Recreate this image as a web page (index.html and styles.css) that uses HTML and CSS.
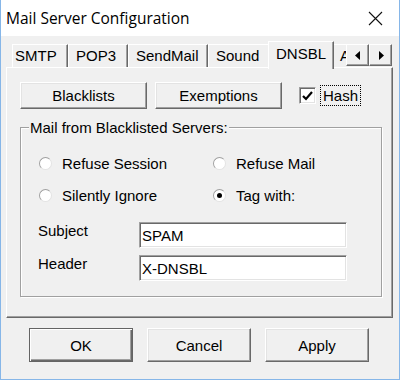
FILE: index.html
```html
<!DOCTYPE html>
<html lang="en">
<head>
  <meta charset="UTF-8" />
  <title>Mail Server Configuration</title>
  <link rel="stylesheet" href="styles.css">
</head>
<body>

<div class="window">
    <div class="titlebar">
        <span class="title">Mail Server Configuration</span>
        <svg class="close" width="15" height="15" viewBox="0 0 15 15">
            <path d="M1 1L14 14M14 1L1 14" stroke="#111" stroke-width="1.1" fill="none"/>
        </svg>
    </div>

    <div class="client">
        <!-- Tabs -->
        <div class="tabrow">
            <div class="tabstrip">
                <div class="tab tab-smtp">SMTP</div>
                <div class="tab tab-pop3">POP3</div>
                <div class="tab tab-sendmail">SendMail</div>
                <div class="tab tab-sound">Sound</div>
                <div class="tab tab-dnsbl active">DNSBL</div>
                <div class="tab tab-more">A</div>
            </div>
            <div class="scroller">
                <span class="scroll-btn">
                    <svg width="6" height="9" viewBox="0 0 6 9"><path d="M5 0V9L0 4.5Z" fill="#000"/></svg>
                </span>
                <span class="scroll-btn">
                    <svg width="6" height="9" viewBox="0 0 6 9"><path d="M1 0V9L6 4.5Z" fill="#000"/></svg>
                </span>
            </div>
        </div>

        <!-- DNSBL page -->
        <div class="panel">
            <div class="toprow">
                <button class="btn list-btn">Blacklists</button>
                <button class="btn list-btn">Exemptions</button>
                <span class="check">
                    <svg width="11" height="10" viewBox="0 0 11 10"><path d="M1 5L4 8L10 1" stroke="#000" stroke-width="2.2" fill="none"/></svg>
                </span>
                <span class="check-label">Hash</span>
            </div>

            <fieldset class="group">
                <legend>Mail from Blacklisted Servers:</legend>
                <div class="options">
                    <div class="option"><span class="radio"></span>Refuse Session</div>
                    <div class="option"><span class="radio"></span>Refuse Mail</div>
                    <div class="option"><span class="radio"></span>Silently Ignore</div>
                    <div class="option"><span class="radio checked"></span>Tag with:</div>
                </div>
                <div class="fields">
                    <div class="field">
                        <label>Subject</label>
                        <input class="input" type="text" value="SPAM">
                    </div>
                    <div class="field">
                        <label>Header</label>
                        <input class="input" type="text" value="X-DNSBL">
                    </div>
                </div>
            </fieldset>
        </div>

        <div class="actions">
            <button class="btn action-btn btn-default">OK</button>
            <button class="btn action-btn">Cancel</button>
            <button class="btn action-btn">Apply</button>
        </div>
    </div>
</div>

</body>
</html>
```

FILE: styles.css
```css
body {
    margin: 0;
    font-family: "Liberation Sans", Arial, sans-serif;
    font-size: 15px;
    color: #000;
}

.window {
    width: 400px;
    height: 380px;
    box-sizing: border-box;
    border: 1px solid #86b6e8;
    border-top: 0;
    display: flex;
    flex-direction: column;
    background: #f0f0f0;
}

.titlebar {
    height: 36px;
    flex: none;
    background: #fff;
    display: flex;
    align-items: center;
    justify-content: space-between;
    padding: 0 16px 0 5px;
}

.title {
    font-family: "Open Sans", "Noto Sans", sans-serif;
    font-size: 15.5px;
    color: #000;
}

.client {
    flex: 1;
    padding: 5px 6px 0 5px;
}

/* tabs */
.tabrow {
    display: flex;
    height: 28px;
    margin: 0 0 -2px 6px;
    position: relative;
    z-index: 1;
}

.tabstrip {
    display: flex;
    align-items: flex-start;
    width: 334px;
    overflow: hidden;
}

.tab {
    flex: none;
    box-sizing: border-box;
    height: 23px;
    margin-top: 3px;
    padding-left: 7px;
    line-height: 22px;
    border-top: 1px solid #fff;
    border-left: 1px solid #fff;
    border-right: 1px solid #696969;
    box-shadow: inset -1px 0 #a0a0a0;
    background: #f0f0f0;
    white-space: nowrap;
}

.tab.active {
    height: 28px;
    margin: 0 -2px;
    line-height: 24px;
    position: relative;
    z-index: 1;
}

.tab-smtp { width: 56px; padding-left: 2px; }
.tab-pop3 { width: 60px; }
.tab-sendmail { width: 80px; }
.tab-sound { width: 62px; }
.tab-dnsbl { width: 66px; }
.tab-more { width: 30px; }

.scroller {
    display: flex;
    margin-top: 3px;
}

.scroll-btn {
    width: 23px;
    height: 22px;
    box-sizing: border-box;
    display: flex;
    align-items: center;
    justify-content: center;
    border: 1px solid;
    border-color: #fff #696969 #696969 #fff;
    box-shadow: inset -1px -1px #a0a0a0;
    background: #f0f0f0;
}

/* page */
.panel {
    box-sizing: border-box;
    width: 387px;
    height: 251px;
    border: 1px solid;
    border-color: #fff #696969 #696969 #fff;
    box-shadow: inset -1px -1px #a0a0a0;
    padding: 14px 10px 0 13px;
}

.btn {
    box-sizing: border-box;
    font: inherit;
    color: #000;
    background: #f0f0f0;
    border: 1px solid;
    border-color: #fff #696969 #696969 #fff;
    box-shadow: inset -1px -1px #a0a0a0, inset 1px 1px #e3e3e3;
    padding: 0;
}

.toprow {
    display: flex;
    align-items: center;
    height: 27px;
}

.list-btn {
    width: 127px;
    height: 27px;
    margin-right: 8px;
}

.list-btn + .list-btn {
    margin-right: 17px;
}

.check {
    width: 17px;
    height: 17px;
    box-sizing: border-box;
    display: flex;
    align-items: center;
    justify-content: center;
    background: #fff;
    border: 1px solid;
    border-color: #a0a0a0 #fff #fff #a0a0a0;
    box-shadow: inset 1px 1px #696969, inset -1px -1px #e3e3e3;
}

.check-label {
    margin-left: 5px;
    padding: 0 2px;
    line-height: 19px;
    outline: 1px dotted #000;
}

.group {
    margin: 10px 0 0;
    padding: 17px 8px 15px;
    min-width: 0;
    border: 1px solid #a0a0a0;
    box-shadow: inset 1px 1px #fff, 1px 1px #fff;
}

.group legend {
    padding: 0 1px;
    line-height: 17px;
    background: #f0f0f0;
}

.options {
    display: grid;
    grid-template-columns: 174px auto;
    row-gap: 12px;
    margin-left: 10px;
}

.option {
    display: flex;
    align-items: center;
    gap: 10px;
    height: 20px;
}

.radio {
    width: 13px;
    height: 13px;
    box-sizing: border-box;
    border-radius: 50%;
    background: #fff;
    border: 1px solid;
    border-color: #a0a0a0 #e3e3e3 #e3e3e3 #a0a0a0;
    display: flex;
    align-items: center;
    justify-content: center;
}

.radio.checked::after {
    content: "";
    width: 5px;
    height: 5px;
    border-radius: 50%;
    background: #000;
}

.fields {
    display: flex;
    flex-direction: column;
    gap: 7px;
    margin: 17px 0 0 9px;
}

.field {
    display: flex;
    align-items: flex-start;
}

.field label {
    width: 101px;
    line-height: 17px;
}

.input {
    box-sizing: border-box;
    width: 208px;
    height: 26px;
    font: inherit;
    color: #000;
    padding: 0 2px;
    background: #fff;
    border: 1px solid;
    border-color: #a0a0a0 #fff #fff #a0a0a0;
    box-shadow: inset 1px 1px #696969, inset -1px -1px #e3e3e3;
    outline: none;
}

.actions {
    display: flex;
    gap: 14px;
    margin: 10px 0 0 23px;
}

.action-btn {
    width: 104px;
    height: 34px;
}

.btn-default {
    border: 1px solid #646464;
    box-shadow: inset 1px 1px #fff, inset -1px -1px #696969, inset -2px -2px #a0a0a0;
}
```
